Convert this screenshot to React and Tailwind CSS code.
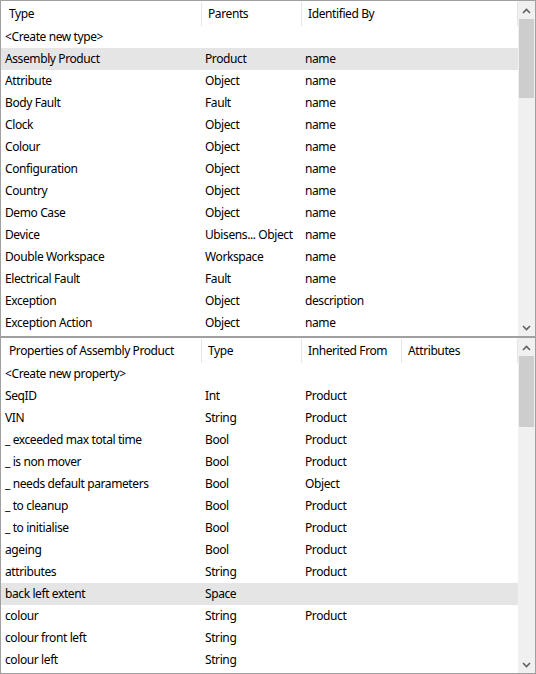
import React from "react";

const topCols = [
  { label: "Type", w: "w-[201px]", hp: "pl-[8px]", rp: "pl-[4px]", sep: true },
  { label: "Parents", w: "w-[100px]", hp: "pl-[6px]", rp: "pl-[3px]", sep: true },
  { label: "Identified By", w: "w-[216px]", hp: "pl-[6px]", rp: "pl-[3px]", sep: true },
];

const topRows = [
  ["<Create new type>", "", ""],
  ["Assembly Product", "Product", "name", true],
  ["Attribute", "Object", "name"],
  ["Body Fault", "Fault", "name"],
  ["Clock", "Object", "name"],
  ["Colour", "Object", "name"],
  ["Configuration", "Object", "name"],
  ["Country", "Object", "name"],
  ["Demo Case", "Object", "name"],
  ["Device", "Ubisens... Object", "name"],
  ["Double Workspace", "Workspace", "name"],
  ["Electrical Fault", "Fault", "name"],
  ["Exception", "Object", "description"],
  ["Exception Action", "Object", "name"],
];

const botCols = [
  { label: "Properties of Assembly Product", w: "w-[201px]", hp: "pl-[8px]", rp: "pl-[4px]", sep: true },
  { label: "Type", w: "w-[100px]", hp: "pl-[6px]", rp: "pl-[3px]", sep: true },
  { label: "Inherited From", w: "w-[100px]", hp: "pl-[6px]", rp: "pl-[3px]", sep: true },
  { label: "Attributes", w: "w-[116px]", hp: "pl-[6px]", rp: "pl-[3px]", sep: true },
];

const botRows = [
  ["<Create new property>", "", "", ""],
  ["SeqID", "Int", "Product", ""],
  ["VIN", "String", "Product", ""],
  ["_ exceeded max total time", "Bool", "Product", ""],
  ["_ is non mover", "Bool", "Product", ""],
  ["_ needs default parameters", "Bool", "Object", ""],
  ["_ to cleanup", "Bool", "Product", ""],
  ["_ to initialise", "Bool", "Product", ""],
  ["ageing", "Bool", "Product", ""],
  ["attributes", "String", "Product", ""],
  ["back left extent", "Space", "", "", true],
  ["colour", "String", "Product", ""],
  ["colour front left", "String", ""],
  ["colour left", "String", ""],
];

function Chevron({ up }) {
  return (
    <svg width="9" height="6" viewBox="0 0 9 6">
      <path
        d={up ? "M1 5 L4.5 1.5 L8 5" : "M1 1 L4.5 4.5 L8 1"}
        fill="none"
        stroke="#606060"
        strokeWidth="1.6"
      />
    </svg>
  );
}

function Scrollbar({ thumbH }) {
  return (
    <div className="w-[17px] h-full bg-[#f0f0f0] flex flex-col">
      <div className="h-[17px] flex items-center justify-center pt-[2px]">
        <Chevron up />
      </div>
      <div className={`mt-[1px] mx-[1px] bg-[#cdcdcd] ${thumbH}`} />
      <div className="flex-1" />
      <div className="h-[17px] flex items-center justify-center">
        <Chevron />
      </div>
    </div>
  );
}

function Panel({ cols, rows, thumbH }) {
  return (
    <div className="h-[337px] border border-[#a0a0a0] flex">
      <div className="w-[517px] flex flex-col">
        <div className="h-[25px] flex">
          {cols.map((c, i) => (
            <div key={i} className={`${c.w} h-full flex`}>
              <div className={`flex-1 flex items-center ${c.hp} pt-[1px] whitespace-nowrap overflow-hidden`}>
                {c.label}
              </div>
              {c.sep && <div className="w-px mt-[1px] bg-[#e5e5e5]" />}
            </div>
          ))}
        </div>
        {rows.map((r, ri) => (
          <div key={ri} className={`h-[22px] flex ${r[r.length - 1] === true ? "bg-[#e5e5e5]" : ""}`}>
            {cols.map((c, i) => (
              <div key={i} className={`${c.w} h-full flex items-center ${c.rp} whitespace-nowrap overflow-hidden`}>
                {typeof r[i] === "string" ? r[i] : ""}
              </div>
            ))}
          </div>
        ))}
      </div>
      <Scrollbar thumbH={thumbH} />
    </div>
  );
}

export default function App() {
  return (
    <div className="w-[536px] h-[674px] bg-white flex flex-col text-[12px] tracking-[-0.4px] text-black font-['Noto_Sans',sans-serif] leading-none">
      <Panel cols={topCols} rows={topRows} thumbH="h-[79px]" />
      <Panel cols={botCols} rows={botRows} thumbH="h-[71px]" />
    </div>
  );
}
